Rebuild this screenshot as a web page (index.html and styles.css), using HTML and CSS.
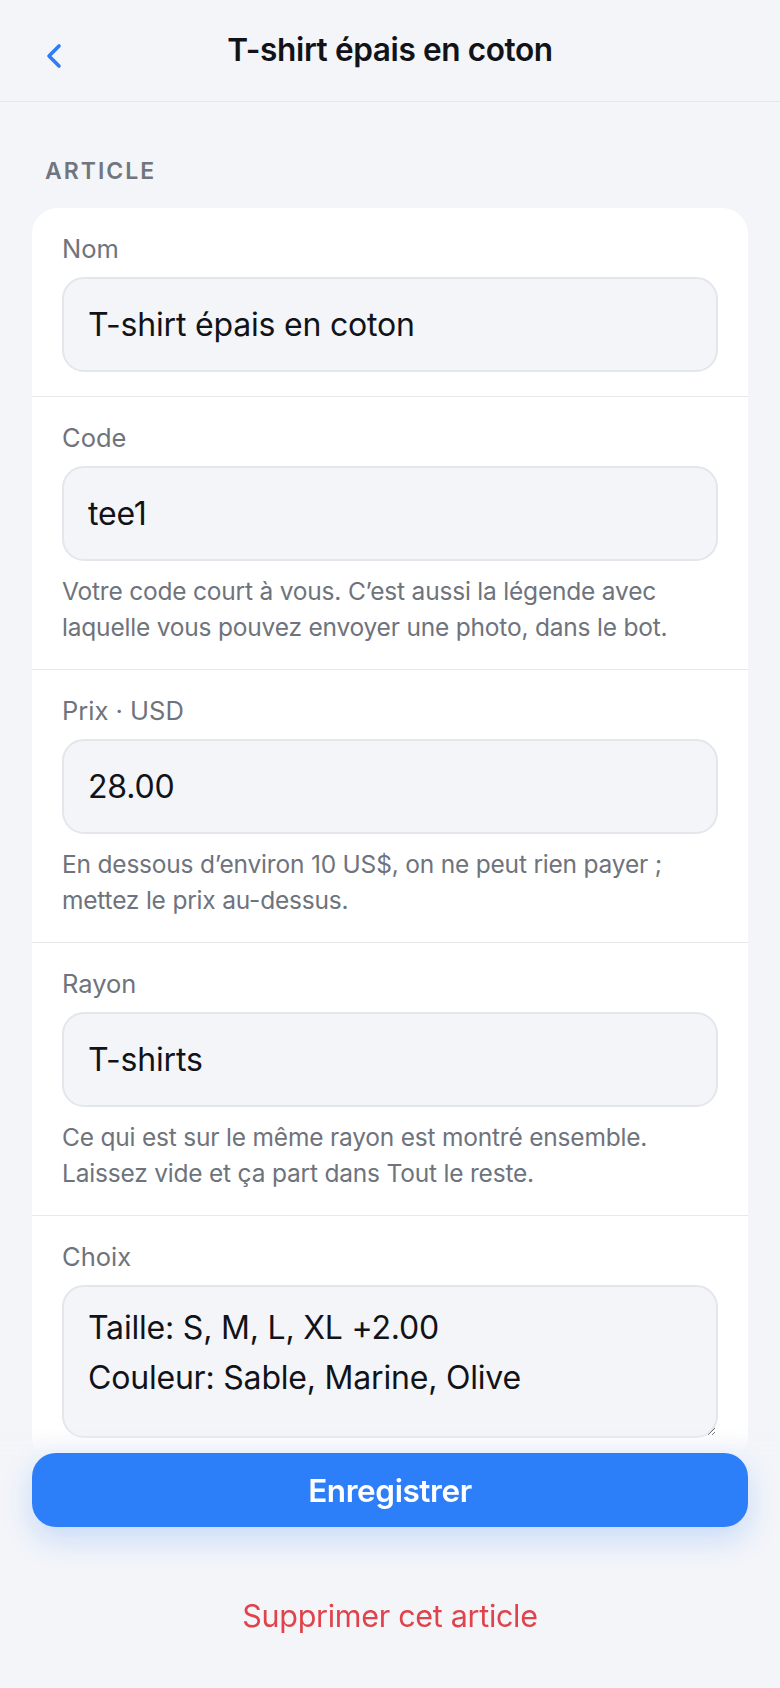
FILE: index.html
```html
<!DOCTYPE html>
<html lang="fr">
<head>
    <meta charset="UTF-8">
    <meta name="viewport" content="width=device-width, initial-scale=1.0">
    <title>T-shirt épais en coton</title>
    <link rel="stylesheet" href="styles.css">
</head>
<body>

    <!-- Top bar -->
    <div class="top-bar">
        <a class="back" href="#">
            <svg width="18" height="26" viewBox="0 0 18 26"><path d="M14 3 L4 13 L14 23" fill="none" stroke="#2f7cf6" stroke-width="3.6" stroke-linecap="round" stroke-linejoin="round"/></svg>
        </a>
        <div class="title">T-shirt épais en coton</div>
    </div>

    <div class="content">
        <div class="section-label">Article</div>

        <div class="card">
            <div class="field">
                <label>Nom</label>
                <input class="input" type="text" value="T-shirt épais en coton">
            </div>
            <div class="field">
                <label>Code</label>
                <input class="input" type="text" value="tee1">
                <p class="hint">Votre code court à vous. C’est aussi la légende avec laquelle vous pouvez envoyer une photo, dans le bot.</p>
            </div>
            <div class="field">
                <label>Prix · USD</label>
                <input class="input" type="text" value="28.00">
                <p class="hint">En dessous d’environ 10 US$, on ne peut rien payer ; mettez le prix au-dessus.</p>
            </div>
            <div class="field">
                <label>Rayon</label>
                <input class="input" type="text" value="T-shirts">
                <p class="hint">Ce qui est sur le même rayon est montré ensemble. Laissez vide et ça part dans Tout le reste.</p>
            </div>
            <div class="field">
                <label>Choix</label>
                <textarea class="input area">Taille: S, M, L, XL +2.00
Couleur: Sable, Marine, Olive</textarea>
            </div>
        </div>
    </div>

    <!-- Sticky actions -->
    <div class="actions">
        <button class="save">Enregistrer</button>
        <a class="delete" href="#">Supprimer cet article</a>
    </div>

</body>
</html>
```

FILE: styles.css
```css
body {
    font-family: "Inter", "Noto Sans", sans-serif;
    background-color: #f3f5f9;
    color: #111318;
    margin: 0;
    padding: 0;
}

/* Top bar */
.top-bar {
    height: 101px;
    border-bottom: 1px solid #e3e6eb;
    display: flex;
    align-items: center;
    justify-content: center;
    position: relative;
}

.top-bar .back {
    position: absolute;
    left: 45px;
    top: 43px;
    display: flex;
}

.top-bar .title {
    font-size: 31.6px;
    font-weight: 600;
    letter-spacing: -0.4px;
    margin-top: -2px;
}

/* Page content */
.content {
    padding: 0 32px 20px;
}

.section-label {
    font-size: 23px;
    font-weight: 600;
    letter-spacing: 2px;
    text-transform: uppercase;
    color: #70757e;
    padding: 55px 0 0 13px;
    line-height: 28px;
    margin-bottom: 23px;
}

/* Card */
.card {
    background: #fff;
    border-radius: 26px;
    overflow: hidden;
}

.field {
    padding: 26px 30px 24px;
    border-bottom: 1px solid #e6e8ec;
}

.field:last-child {
    border-bottom: none;
}

.field label {
    display: block;
    font-size: 25.5px;
    line-height: 30px;
    color: #6e737c;
    margin-bottom: 13px;
}

.input {
    display: block;
    box-sizing: border-box;
    width: 100%;
    height: 95px;
    padding: 0 24px;
    border: 2px solid #e3e6ea;
    border-radius: 22px;
    background: #f3f5f8;
    font-family: inherit;
    font-size: 32px;
    letter-spacing: -0.2px;
    color: #111318;
    outline: none;
}

.input.area {
    height: 153px;
    padding: 16px 24px;
    line-height: 50px;
    resize: vertical;
}

.hint {
    margin: 12px 0 0;
    font-size: 24.5px;
    line-height: 36px;
    letter-spacing: -0.2px;
    color: #6e737c;
}

/* Sticky actions */
.actions {
    position: fixed;
    left: 0;
    right: 0;
    bottom: 0;
    padding: 24px 32px 54px;
    background: linear-gradient(to bottom, rgba(243, 245, 249, 0), #f3f5f9 26px);
    display: flex;
    flex-direction: column;
    align-items: center;
}

.save {
    width: 100%;
    height: 74px;
    border: none;
    border-radius: 24px;
    background: #2d7ff9;
    color: #fff;
    font-family: inherit;
    font-size: 31.5px;
    font-weight: 600;
    letter-spacing: -0.4px;
    box-shadow: 0 12px 30px rgba(45, 127, 249, 0.22);
}

.delete {
    margin-top: 70px;
    font-size: 30.5px;
    color: #e0434b;
    text-decoration: none;
    letter-spacing: -0.3px;
}
```
